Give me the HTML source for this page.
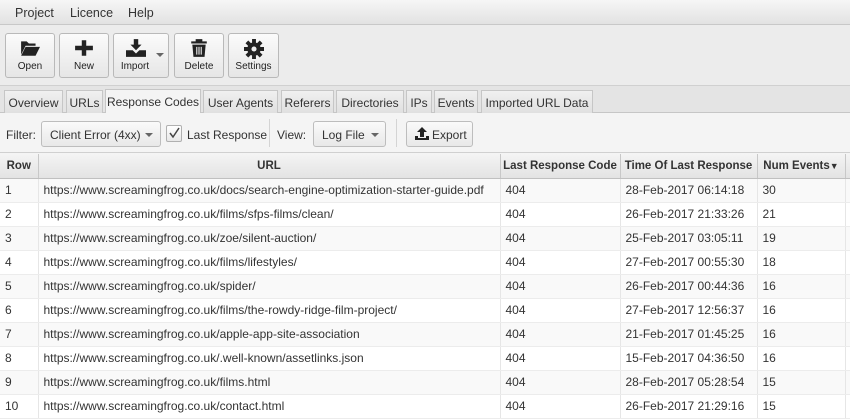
<!DOCTYPE html>
<html><head><style>
*{box-sizing:border-box;margin:0;padding:0}
body{width:850px;height:419px;overflow:hidden;background:#f4f4f4;font-family:"Liberation Sans",sans-serif;font-size:12px;color:#333;position:relative}
.menu{position:absolute;top:0;left:0;width:850px;height:25px;background:linear-gradient(#f6f6f6,#e2e2e2);border-bottom:1px solid #c8c8c8}
.menu span{position:absolute;top:6px;font-size:12.5px;color:#333}
.tb{position:absolute;top:25px;left:0;width:850px;height:61px;background:#ececec;border-bottom:1px solid #d0d0d0}
.btn{position:absolute;top:8px;height:45px;border:1px solid #b9b9b9;border-radius:3px;background:linear-gradient(#fbfbfb,#e6e6e6);text-align:center;font-size:10px;color:#222}
.btn svg{position:absolute;top:5px;left:50%;margin-left:-10px}
.btn .l{position:absolute;bottom:5px;left:0;right:0}
.tabs{position:absolute;top:86px;left:0;width:850px;height:27px;background:#e4e4e4;border-bottom:1px solid #c6c6c6}
.tab{position:absolute;top:4px;height:23px;border:1px solid #c6c6c6;border-bottom:none;background:linear-gradient(#f0f0f0,#e0e0e0);font-size:12px;padding-top:5px;text-align:center;color:#333;white-space:nowrap}
.tab.a{background:#f4f4f4;height:24px;top:3px}
.fb{position:absolute;top:113px;left:0;width:850px;height:40px;background:#f4f4f4;border-bottom:1px solid #d0d0d0}
.fb .t{position:absolute;top:15px;font-size:12px}
.dd{position:absolute;top:8px;height:26px;border:1px solid #bdbdbd;border-radius:3px;background:linear-gradient(#fafafa,#e8e8e8);padding:6px 0 0 8px;font-size:12px}
.tri{position:absolute;width:0;height:0;border-left:4px solid transparent;border-right:4px solid transparent;border-top:4px solid #666}
table{position:absolute;top:154px;left:0;border-collapse:collapse;table-layout:fixed;width:860px;background:#fff}
th{height:24px;background:linear-gradient(#f4f4f4,#e3e3e3);border-right:1px solid #c8c8c8;border-bottom:1px solid #c0c0c0;font-weight:bold;font-size:11.5px;color:#333;white-space:nowrap;overflow:hidden}
td{height:24px;border-right:1px solid #e6e6e6;border-bottom:1px solid #ececec;padding-left:5px;white-space:nowrap;overflow:hidden;font-size:12px;color:#333}
tr:nth-child(even) td{background:#f9f9f9}
</style></head><body>
<div class="menu"><span style="left:15px">Project</span><span style="left:70px">Licence</span><span style="left:128px">Help</span></div>
<div class="tb">
<div class="btn" style="left:5px;width:50px"><svg width="20" height="18" viewBox="0 0 18 16"><path d="M1 2h5l2 2h6v2H5L1 14z M5 7h13l-4 8H1z" fill="#222"/></svg><div class="l">Open</div></div>
<div class="btn" style="left:59px;width:50px"><svg width="20" height="18" viewBox="0 0 18 16"><path d="M7 1h4v5h6v4h-6v5H7v-5H1V6h6z" fill="#222"/></svg><div class="l">New</div></div>
<div class="btn" style="left:113px;width:56px"><svg width="20" height="18" viewBox="0 0 18 16" style="margin-left:-15px"><path d="M7 0h4v5h3l-5 5-5-5h3z M0 10h6l3 3 3-3h6v6H0z" fill="#222"/></svg><div class="tri" style="left:42px;top:19px"></div><div class="l" style="right:12px">Import</div></div>
<div class="btn" style="left:174px;width:50px"><svg width="20" height="18" viewBox="0 0 18 16"><path d="M6 0h6v2h4v2H2V2h4z M3 5h12l-1 11H4z" fill="#222"/><path d="M7 7v7M9 7v7M11 7v7" stroke="#eee" stroke-width="1"/></svg><div class="l">Delete</div></div>
<div class="btn" style="left:228px;width:51px"><svg width="20" height="20" viewBox="0 0 18 18"><circle cx="9" cy="9" r="6" fill="#222"/><path d="M9 0v18M0 9h18M2.6 2.6l12.8 12.8M15.4 2.6L2.6 15.4" stroke="#222" stroke-width="3.5"/><circle cx="9" cy="9" r="2.3" fill="#eee"/></svg><div class="l">Settings</div></div>
</div>
<div class="tabs">
<div class="tab" style="left:4px;width:59px">Overview</div>
<div class="tab" style="left:66px;width:37px">URLs</div>
<div class="tab a" style="left:105px;width:96px">Response Codes</div>
<div class="tab" style="left:203px;width:75px">User Agents</div>
<div class="tab" style="left:281px;width:53px">Referers</div>
<div class="tab" style="left:336px;width:68px">Directories</div>
<div class="tab" style="left:406px;width:26px">IPs</div>
<div class="tab" style="left:434px;width:44px">Events</div>
<div class="tab" style="left:481px;width:112px">Imported URL Data</div>
</div>
<div class="fb">
<span class="t" style="left:6px">Filter:</span>
<div class="dd" style="left:41px;width:120px">Client Error (4xx)<div class="tri" style="left:103px;top:11px"></div></div>
<div style="position:absolute;left:166px;top:12px;width:16px;height:17px;border:1px solid #b0b0b0;border-radius:2px;background:linear-gradient(#fff,#e8e8e8)"><svg width="14" height="14" viewBox="0 0 14 14"><path d="M3 7l3 4 6-9" stroke="#444" stroke-width="1.5" fill="none"/></svg></div>
<span class="t" style="left:187px">Last Response</span>
<div style="position:absolute;left:269px;top:6px;width:1px;height:28px;background:#d4d4d4"></div>
<span class="t" style="left:277px">View:</span>
<div class="dd" style="left:313px;width:73px">Log File<div class="tri" style="left:57px;top:11px"></div></div>
<div style="position:absolute;left:396px;top:6px;width:1px;height:28px;background:#d4d4d4"></div>
<div class="dd" style="left:406px;width:67px;padding-left:25px">Export<svg style="position:absolute;left:8px;top:5px" width="14" height="13" viewBox="0 0 14 13"><path d="M5 10V5H2l5-5 5 5H9v5z M0 9h3v2h8V9h3v4H0z" fill="#222"/></svg></div>
</div>
<table>
<colgroup><col style="width:38px"><col style="width:462px"><col style="width:120px"><col style="width:137px"><col style="width:88px"><col style="width:15px"></colgroup>
<tr><th>Row</th><th>URL</th><th>Last Response Code</th><th>Time Of Last Response</th><th>Num Events<span style="font-size:9px">▼</span></th><th></th></tr>
<tr><td>1</td><td>https://www.screamingfrog.co.uk/docs/search-engine-optimization-starter-guide.pdf</td><td>404</td><td>28-Feb-2017 06:14:18</td><td>30</td><td>0</td></tr>
<tr><td>2</td><td>https://www.screamingfrog.co.uk/films/sfps-films/clean/</td><td>404</td><td>26-Feb-2017 21:33:26</td><td>21</td><td>0</td></tr>
<tr><td>3</td><td>https://www.screamingfrog.co.uk/zoe/silent-auction/</td><td>404</td><td>25-Feb-2017 03:05:11</td><td>19</td><td>0</td></tr>
<tr><td>4</td><td>https://www.screamingfrog.co.uk/films/lifestyles/</td><td>404</td><td>27-Feb-2017 00:55:30</td><td>18</td><td>0</td></tr>
<tr><td>5</td><td>https://www.screamingfrog.co.uk/spider/</td><td>404</td><td>26-Feb-2017 00:44:36</td><td>16</td><td>0</td></tr>
<tr><td>6</td><td>https://www.screamingfrog.co.uk/films/the-rowdy-ridge-film-project/</td><td>404</td><td>27-Feb-2017 12:56:37</td><td>16</td><td>0</td></tr>
<tr><td>7</td><td>https://www.screamingfrog.co.uk/apple-app-site-association</td><td>404</td><td>21-Feb-2017 01:45:25</td><td>16</td><td>0</td></tr>
<tr><td>8</td><td>https://www.screamingfrog.co.uk/.well-known/assetlinks.json</td><td>404</td><td>15-Feb-2017 04:36:50</td><td>16</td><td>0</td></tr>
<tr><td>9</td><td>https://www.screamingfrog.co.uk/films.html</td><td>404</td><td>28-Feb-2017 05:28:54</td><td>15</td><td>0</td></tr>
<tr><td>10</td><td>https://www.screamingfrog.co.uk/contact.html</td><td>404</td><td>26-Feb-2017 21:29:16</td><td>15</td><td>0</td></tr>
</table>
</body></html>
